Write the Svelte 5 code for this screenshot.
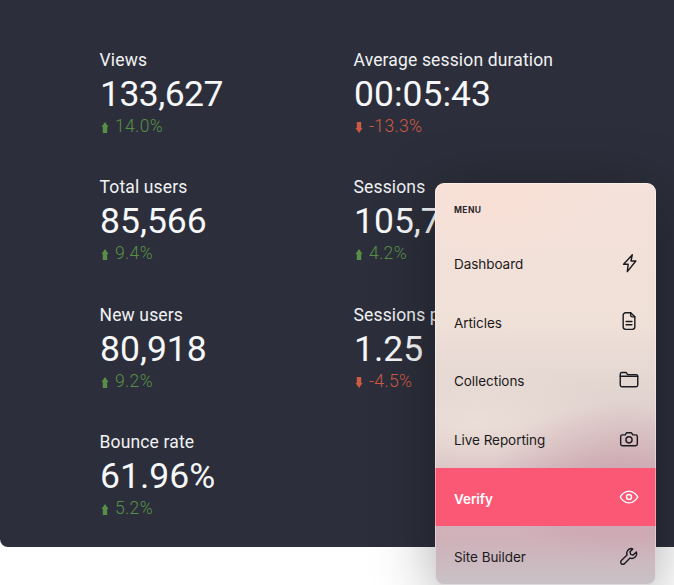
<script>
  const stats = [
    { label: 'Views', value: '133,627', delta: '14.0%', up: true, tight: true },
    { label: 'Average session duration', value: '00:05:43', delta: '-13.3%', up: false },
    { label: 'Total users', value: '85,566', delta: '9.4%', up: true },
    { label: 'Sessions', value: '105,743', delta: '4.2%', up: true },
    { label: 'New users', value: '80,918', delta: '9.2%', up: true },
    { label: 'Sessions per user', value: '1.25', delta: '-4.5%', up: false },
    { label: 'Bounce rate', value: '61.96%', delta: '5.2%', up: true }
  ];
  const items = [
    { name: 'Dashboard', icon: 'bolt' },
    { name: 'Articles', icon: 'doc' },
    { name: 'Collections', icon: 'folder' },
    { name: 'Live Reporting', icon: 'camera' },
    { name: 'Verify', icon: 'eye', active: true },
    { name: 'Site Builder', icon: 'wrench' }
  ];
</script>

<div class="page">
  <section class="panel">
    <div class="grid">
      {#each stats as s}
        <div class="stat">
          <div class="label">{s.label}</div>
          <div class="value" class:tight={s.tight}>{s.value}</div>
          <div class="delta" class:down={!s.up}>
            <svg class="arrow" viewBox="0 0 8 13" width="8" height="13" aria-hidden="true">
              {#if s.up}
                <path d="M4 1 L7.500 6 H6.200 V12 H1.800 V6 H0.500 Z" fill="currentColor" />
              {:else}
                <path d="M4 12 L7.500 7 H6.200 V1 H1.800 V7 H0.500 Z" fill="currentColor" />
              {/if}
            </svg>
            <span>{s.delta}</span>
          </div>
        </div>
      {/each}
    </div>
  </section>

  <nav class="menu">
    <div class="title">MENU</div>
    {#each items as item}
      <div class="row" class:active={item.active}>
        <span>{item.name}</span>
        <svg class="icon" viewBox="0 0 24 24" width="20" height="20" fill="none" stroke="currentColor" stroke-width="1.700" stroke-linecap="round" stroke-linejoin="round" aria-hidden="true">
          {#if item.icon === 'bolt'}
            <path d="M16 2 5.500 13.500H11L10 22.400 20.200 9.600H14.400z" />
          {:else if item.icon === 'doc'}
            <path d="M14 2H8a3 3 0 0 0-3 3v14a3 3 0 0 0 3 3h8a3 3 0 0 0 3-3V7z" />
            <path d="M14 2v3a2 2 0 0 0 2 2h3M8.500 12.500h7M8.500 16.500h7" />
          {:else if item.icon === 'folder'}
            <path d="M1.500 5a2 2 0 0 1 2-2h5l2 2.500h10a2 2 0 0 1 2 2V18a2 2 0 0 1-2 2h-17a2 2 0 0 1-2-2z" />
            <path d="M1.500 7.500h21" />
          {:else if item.icon === 'camera'}
            <path d="M4 7h3.500l1.500-2.500h6L16.500 7H20a2 2 0 0 1 2 2v9a2 2 0 0 1-2 2H4a2 2 0 0 1-2-2V9a2 2 0 0 1 2-2z" />
            <circle cx="12" cy="13" r="3.700" />
          {:else if item.icon === 'eye'}
            <path d="M1.500 12S5.500 5 12 5s10.500 7 10.500 7-4 7-10.500 7S1.500 12 1.500 12z" />
            <circle cx="12" cy="12" r="3" />
          {:else}
            <path d="M15 3a5.800 5.800 0 0 0-5.400 7.800L2.800 17.500a2.600 2.600 0 0 0 3.700 3.700l6.700-6.700a5.800 5.800 0 0 0 7.600-7.300L17 10.800l-3-.8-.8-3 3.400-3.400A5.800 5.800 0 0 0 15 3z" />
          {/if}
        </svg>
      </div>
    {/each}
  </nav>
</div>

<style>
  :global(body) {
    margin: 0;
    background: #fff;
  }
  .page {
    position: relative;
    width: 674px;
    height: 585px;
    overflow: hidden;
    background: #fff;
  }
  .panel {
    height: 547px;
    box-sizing: border-box;
    padding: 50px 0 0 100px;
    background: #2c2f3b;
    border-bottom-left-radius: 8px;
    font-family: Roboto, sans-serif;
  }
  .grid {
    display: grid;
    grid-template-columns: 254px 254px;
    grid-auto-rows: 127.400px;
  }
  .label {
    font-size: 17.500px;
    line-height: 20px;
    letter-spacing: 0.15px;
    color: #f1f2f4;
    margin-left: -0.5px;
  }
  .value {
    font-size: 35.500px;
    line-height: 42px;
    margin-top: 3px;
    color: #f6f7f8;
  }
  .value.tight {
    letter-spacing: -0.55px;
  }
  .delta {
    display: flex;
    align-items: center;
    gap: 6px;
    margin-top: 1px;
    font-size: 17.500px;
    font-weight: 300;
    letter-spacing: 0.35px;
    line-height: 20px;
    color: #578f46;
  }
  .delta.down {
    color: #cf5a43;
  }
  .arrow {
    margin: 3px 0 0 1px;
  }
  .menu {
    position: absolute;
    left: 435px;
    top: 183px;
    width: 221px;
    height: 401.500px;
    border-radius: 9px;
    overflow: hidden;
    color: #1b1a20;
    font-family: Inter, sans-serif;
    background:
      radial-gradient(130px 80px at 185px 300px, rgba(196, 150, 165, 0.65), transparent),
      radial-gradient(150px 60px at 40px 240px, rgba(240, 228, 220, 0.7), transparent),
      radial-gradient(110px 70px at 60px 10px, rgba(250, 222, 212, 0.8), transparent),
      linear-gradient(180deg, #f5e2da 0%, #efe0d8 35%, #e2d5d0 52%, #dcc9c8 66%, #d2b8bd 76%, #d0b0b9 88%, #c8c2c6 100%);
    box-shadow: 0 10px 60px rgba(0, 0, 0, 0.34);
  }
  .menu::after {
    content: '';
    position: absolute;
    inset: 0;
    border: 1px solid rgba(255, 255, 255, 0.4);
    border-radius: 9px;
    pointer-events: none;
  }
  .title {
    height: 50.500px;
    box-sizing: border-box;
    padding: 22px 0 0 19px;
    font-size: 8.500px;
    line-height: 10px;
    font-weight: 700;
    letter-spacing: 0.4px;
    color: #2a262c;
  }
  .row {
    display: flex;
    align-items: center;
    justify-content: space-between;
    height: 58.600px;
    padding: 0 17px 0 19px;
    font-size: 13.500px;
    letter-spacing: -0.05px;
  }
  .row span {
    position: relative;
    top: 1.400px;
  }
  .row.active {
    background: #fb5876;
    color: #fff;
    font-weight: 600;
  }
</style>
